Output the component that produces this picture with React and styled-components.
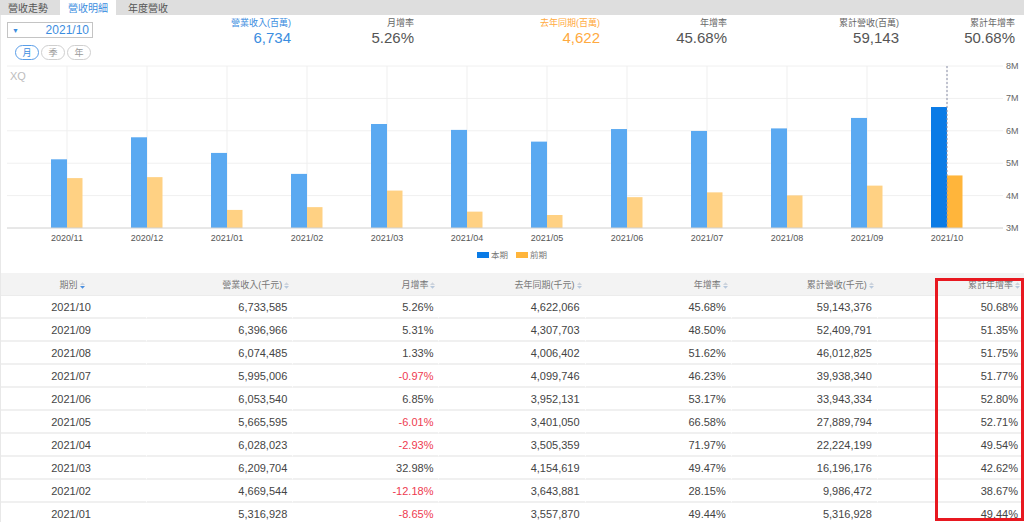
import React from "react";
import styled, { createGlobalStyle } from "styled-components";

const GlobalStyle = createGlobalStyle`
  html, body { margin: 0; padding: 0; background: #fff; }
  body {
    font-family: "Liberation Sans", "Noto Sans CJK TC", Arial, sans-serif;
    width: 1024px;
    overflow: hidden;
  }
  * { box-sizing: border-box; }
`;

const Page = styled.div`
  position: relative;
  width: 1024px;
  height: 522px;
  overflow: hidden;
`;

const TabBar = styled.div`
  display: flex;
  gap: 4px;
  height: 15px;
  background: #dedede;
`;

const Tab = styled.div`
  padding: 0 8px;
  height: 15px;
  line-height: 15px;
  font-size: 10px;
  font-family: "Noto Sans CJK TC", sans-serif;
  color: ${(p) => (p.$active ? "#3b8de0" : "#555")};
  background: ${(p) => (p.$active ? "#fff" : "transparent")};
`;

const Body = styled.div`
  border-left: 1px solid #e8e8e8;
`;

const TopSection = styled.div`
  display: flex;
  height: 47px;
`;

const Controls = styled.div`
  width: 169px;
  padding: 7px 0 0 6px;
  display: flex;
  flex-direction: column;
  gap: 7px;
`;

const SelectBox = styled.div`
  width: 86px;
  height: 16px;
  border: 1px solid #c4c4c4;
  display: flex;
  align-items: center;
  justify-content: space-between;
  padding: 0 3px 0 4px;
  color: #3b8de0;
  font-size: 12px;
`;

const Caret = styled.span`
  font-size: 7px;
  color: #3b8de0;
`;

const PeriodRow = styled.div`
  display: flex;
  gap: 2px;
  padding-left: 8px;
`;

const PeriodButton = styled.div`
  width: 24px;
  height: 15px;
  border-radius: 8px;
  border: 1px solid ${(p) => (p.$active ? "#5a9ee8" : "#cfcfcf")};
  color: ${(p) => (p.$active ? "#3b8de0" : "#999")};
  font-size: 9px;
  font-family: "Noto Sans CJK TC", sans-serif;
  display: flex;
  align-items: center;
  justify-content: center;
  line-height: 1;
`;

const Stats = styled.div`
  display: flex;
  padding-top: 3px;
`;

const Stat = styled.div`
  width: ${(p) => p.$w}px;
  text-align: right;
  display: flex;
  flex-direction: column;
`;

const StatLabel = styled.div`
  font-size: 9px;
  line-height: 10px;
  height: 10px;
  font-family: "Liberation Sans", "Noto Sans CJK TC", sans-serif;
  color: ${(p) => p.$color || "#666"};
`;

const StatValue = styled.div`
  font-size: 15px;
  line-height: 17px;
  margin-top: 1px;
  color: ${(p) => p.$color || "#555"};
`;

const ChartWrap = styled.div`
  height: 211px;
`;

const TableWrap = styled.div`
  position: relative;
`;

const Table = styled.table`
  width: 1023px;
  table-layout: fixed;
  border-collapse: separate;
  border-spacing: 0;
`;

const HeadCell = styled.th`
  height: 23px;
  padding: 0 4px 0 0;
  background: #f3f3f3;
  font-weight: normal;
  font-size: 9px;
  color: #777;
  font-family: "Liberation Sans", "Noto Sans CJK TC", sans-serif;
  text-align: ${(p) => (p.$center ? "center" : "right")};
  white-space: nowrap;
  border-bottom: 1px solid #ececec;
`;

const Cell = styled.td`
  height: 23px;
  padding: 0 5px 0 0;
  font-size: 11px;
  color: ${(p) => (p.$neg ? "#ee3a4f" : "#444")};
  text-align: ${(p) => (p.$center ? "center" : "right")};
  border-bottom: 2px solid #f0f0f0;
  border-right: 1px solid #fff;
  white-space: nowrap;
`;

const SortIcon = styled.svg`
  width: 5px;
  height: 7px;
  margin-left: 2px;
  vertical-align: -1px;
`;

const Highlight = styled.div`
  position: absolute;
  left: 934px;
  top: 5px;
  width: 89px;
  height: 243px;
  border: 3px solid #e81820;
  pointer-events: none;
`;

const chartData = [
  ["2020/11", 5.12, 4.54],
  ["2020/12", 5.8, 4.57],
  ["2021/01", 5.317, 3.558],
  ["2021/02", 4.67, 3.644],
  ["2021/03", 6.21, 4.155],
  ["2021/04", 6.028, 3.505],
  ["2021/05", 5.666, 3.401],
  ["2021/06", 6.054, 3.952],
  ["2021/07", 5.995, 4.1],
  ["2021/08", 6.074, 4.006],
  ["2021/09", 6.397, 4.308],
  ["2021/10", 6.734, 4.622],
];

const rows = [
  ["2021/10", "6,733,585", "5.26%", "4,622,066", "45.68%", "59,143,376", "50.68%"],
  ["2021/09", "6,396,966", "5.31%", "4,307,703", "48.50%", "52,409,791", "51.35%"],
  ["2021/08", "6,074,485", "1.33%", "4,006,402", "51.62%", "46,012,825", "51.75%"],
  ["2021/07", "5,995,006", "-0.97%", "4,099,746", "46.23%", "39,938,340", "51.77%"],
  ["2021/06", "6,053,540", "6.85%", "3,952,131", "53.17%", "33,943,334", "52.80%"],
  ["2021/05", "5,665,595", "-6.01%", "3,401,050", "66.58%", "27,889,794", "52.71%"],
  ["2021/04", "6,028,023", "-2.93%", "3,505,359", "71.97%", "22,224,199", "49.54%"],
  ["2021/03", "6,209,704", "32.98%", "4,154,619", "49.47%", "16,196,176", "42.62%"],
  ["2021/02", "4,669,544", "-12.18%", "3,643,881", "28.15%", "9,986,472", "38.67%"],
  ["2021/01", "5,316,928", "-8.65%", "3,557,870", "49.44%", "5,316,928", "49.44%"],
];

const headers = ["期別", "營業收入(千元)", "月增率", "去年同期(千元)", "年增率", "累計營收(千元)", "累計年增率"];

function Sort({ active }) {
  return (
    <SortIcon viewBox="0 0 5 7">
      <polygon points="0,3 2.5,0.3 5,3" fill="#cdd3dc" />
      <polygon points="0,4 2.5,6.7 5,4" fill={active ? "#4a8fe0" : "#b8c8dc"} />
    </SortIcon>
  );
}

function Chart() {
  const top = 4;
  const base = 166;
  const k = 32.4;
  const y = (v) => base - (v - 3) * k;
  const cx = (i) => 66 + 80 * i;
  return (
    <svg width="1023" height="211" viewBox="0 0 1023 211" style={{ display: "block" }}>
      <text x="9" y="18" fontSize="11" fill="#bdbdbd" fontFamily="Liberation Sans, sans-serif">XQ</text>
      {[4, 5, 6, 7, 8].map((m) => (
        <line key={m} x1="6" x2="1002" y1={y(m)} y2={y(m)} stroke="#f0f0f0" strokeWidth="1" />
      ))}
      {chartData.map((d, i) => (
        <line key={d[0]} x1={cx(i)} x2={cx(i)} y1={top} y2={base} stroke="#efefef" strokeWidth="1" />
      ))}
      {chartData.map((d, i) => {
        const last = i === chartData.length - 1;
        return (
          <g key={"b" + d[0]}>
            <rect x={cx(i) - 16} y={y(d[1])} width="16" height={base - y(d[1])} fill={last ? "#0a7be6" : "#5aa9f1"} />
            <rect x={cx(i)} y={y(d[2])} width="15.5" height={base - y(d[2])} fill={last ? "#ffb53b" : "#ffd183"} />
          </g>
        );
      })}
      <line x1={cx(11)} x2={cx(11)} y1={top} y2={base} stroke="#8a8fa8" strokeWidth="1" strokeDasharray="2,2" />
      <line x1="6" x2="1002" y1={base} y2={base} stroke="#d0d0d0" strokeWidth="1" />
      {[3, 4, 5, 6, 7, 8].map((m) => (
        <text key={"t" + m} x="1005" y={y(m) + 3} fontSize="9" fill="#666" fontFamily="Liberation Sans, sans-serif">
          {m}M
        </text>
      ))}
      {chartData.map((d, i) => (
        <text key={"l" + d[0]} x={cx(i)} y={base + 13} fontSize="9" fill="#555" textAnchor="middle" fontFamily="Liberation Sans, sans-serif">
          {d[0]}
        </text>
      ))}
      <rect x="476" y="190" width="12" height="6" fill="#0a7be6" />
      <text x="490" y="196" fontSize="8.5" fill="#777" fontFamily="Noto Sans CJK TC, sans-serif">本期</text>
      <rect x="515" y="190" width="12" height="6" fill="#ffb53b" />
      <text x="529" y="196" fontSize="8.5" fill="#777" fontFamily="Noto Sans CJK TC, sans-serif">前期</text>
    </svg>
  );
}

const stats = [
  { w: 121, label: "營業收入(百萬)", value: "6,734", color: "#3b8de0" },
  { w: 123, label: "月增率", value: "5.26%" },
  { w: 186, label: "去年同期(百萬)", value: "4,622", color: "#ffaa40" },
  { w: 127, label: "年增率", value: "45.68%" },
  { w: 172, label: "累計營收(百萬)", value: "59,143" },
  { w: 116, label: "累計年增率", value: "50.68%" },
];

export default function App() {
  return (
    <Page>
      <GlobalStyle />
      <TabBar>
        <Tab>營收走勢</Tab>
        <Tab $active>營收明細</Tab>
        <Tab>年度營收</Tab>
      </TabBar>
      <Body>
        <TopSection>
          <Controls>
            <SelectBox>
              <Caret>▼</Caret>
              <span>2021/10</span>
            </SelectBox>
            <PeriodRow>
              <PeriodButton $active>月</PeriodButton>
              <PeriodButton>季</PeriodButton>
              <PeriodButton>年</PeriodButton>
            </PeriodRow>
          </Controls>
          <Stats>
            {stats.map((s) => (
              <Stat key={s.label} $w={s.w}>
                <StatLabel $color={s.color}>{s.label}</StatLabel>
                <StatValue $color={s.color}>{s.value}</StatValue>
              </Stat>
            ))}
          </Stats>
        </TopSection>
        <ChartWrap>
          <Chart />
        </ChartWrap>
        <TableWrap>
          <Table>
            <thead>
              <tr>
                {headers.map((h, i) => (
                  <HeadCell key={h} $center={i === 0}>
                    {h}
                    <Sort active={i === 0} />
                  </HeadCell>
                ))}
              </tr>
            </thead>
            <tbody>
              {rows.map((r) => (
                <tr key={r[0]}>
                  {r.map((c, i) => (
                    <Cell key={i} $center={i === 0} $neg={c.startsWith("-")}>
                      {c}
                    </Cell>
                  ))}
                </tr>
              ))}
            </tbody>
          </Table>
          <Highlight />
        </TableWrap>
      </Body>
    </Page>
  );
}
